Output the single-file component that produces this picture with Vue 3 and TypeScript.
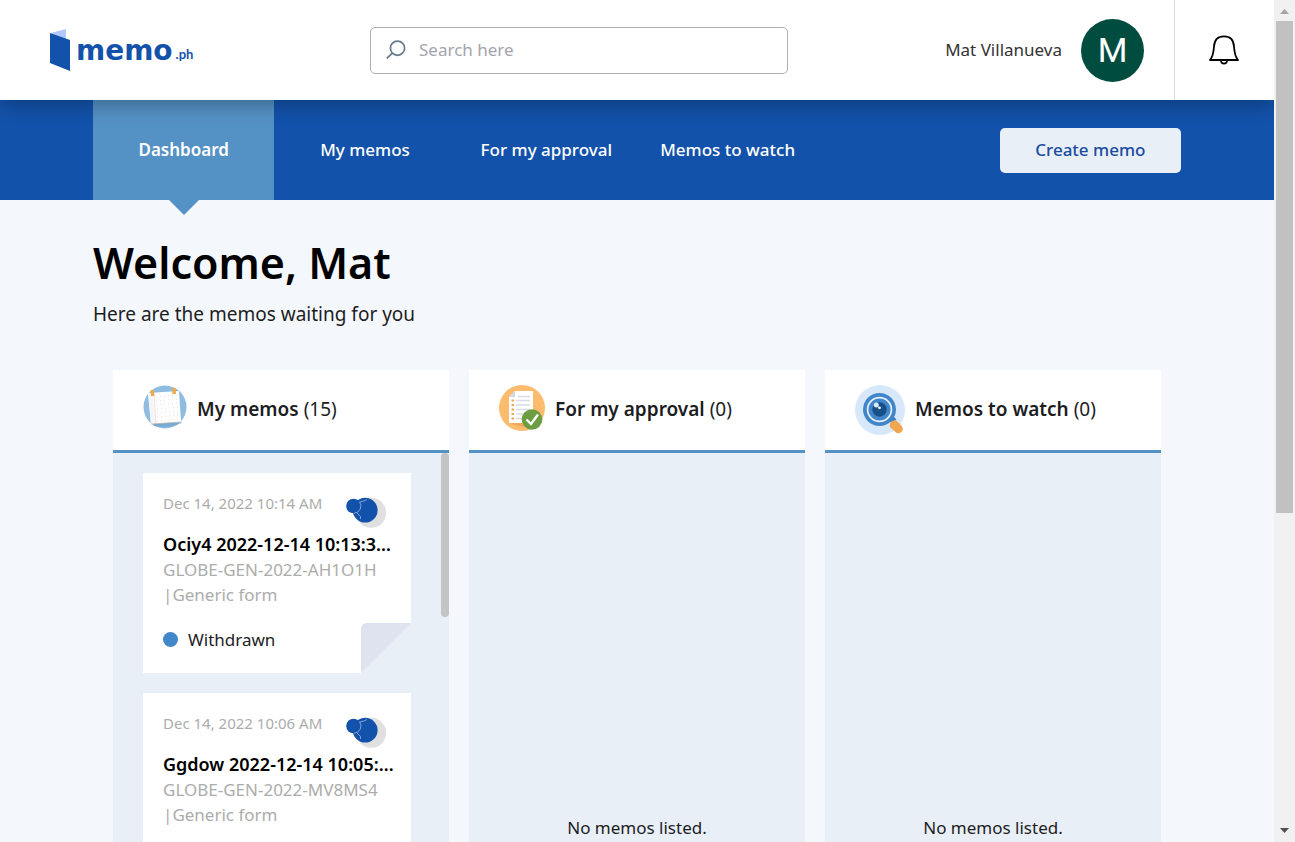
<script setup lang="ts">
interface Memo {
  date: string
  title: string
  code: string
  form: string
  status?: string
}

interface Board {
  id: 'mine' | 'approval' | 'watch'
  title: string
  count: number
  memos: Memo[]
}

const tabs = ['Dashboard', 'My memos', 'For my approval', 'Memos to watch']
const activeTab = 'Dashboard'

const boards: Board[] = [
  {
    id: 'mine',
    title: 'My memos',
    count: 15,
    memos: [
      { date: 'Dec 14, 2022 10:14 AM', title: 'Ociy4 2022-12-14 10:13:3…', code: 'GLOBE-GEN-2022-AH1O1H', form: 'Generic form', status: 'Withdrawn' },
      { date: 'Dec 14, 2022 10:06 AM', title: 'Ggdow 2022-12-14 10:05:…', code: 'GLOBE-GEN-2022-MV8MS4', form: 'Generic form' },
    ],
  },
  { id: 'approval', title: 'For my approval', count: 0, memos: [] },
  { id: 'watch', title: 'Memos to watch', count: 0, memos: [] },
]
</script>

<template>
  <div class="window">
    <div class="page">
      <header class="topbar">
        <a class="brand" href="#" aria-label="memo.ph home">
          <svg class="brand-mark" viewBox="0 0 20 42" aria-hidden="true">
            <path d="M1 4 L16 0 V10 L10 12 Z" fill="#b0c8fb" />
            <path d="M0 4 L20 11 V42 L0 34 Z" fill="#1352ab" />
          </svg>
          <span class="brand-name">memo</span><span class="brand-tld">.ph</span>
        </a>
        <label class="search">
          <svg class="search-icon" viewBox="0 0 20 20" fill="none" stroke="#66798c" stroke-width="1.7" aria-hidden="true">
            <circle cx="11.5" cy="8.2" r="7.1" />
            <path d="M6.4 13.2 L0.8 18.4" />
          </svg>
          <input type="search" placeholder="Search here" aria-label="Search" />
        </label>
        <div class="account">
          <span class="account-name">Mat Villanueva</span>
          <span class="avatar">M</span>
        </div>
        <button class="bell" type="button" aria-label="Notifications">
          <svg viewBox="0 0 32 32" fill="none" stroke="#000" stroke-width="1.8" aria-hidden="true">
            <path d="M2 26 C5.2 22.5 5.6 18 6 12.5 C6.4 5.5 10.5 2.4 16 2.4 C21.5 2.4 25.6 5.5 26 12.5 C26.4 18 26.8 22.5 30 26 Z" stroke-linejoin="round" />
            <path d="M13 27 C13.3 30.5 18.7 30.5 19 27" />
          </svg>
        </button>
      </header>

      <nav class="tabs">
        <a v-for="tab in tabs" :key="tab" href="#" class="tab" :class="{ active: tab === activeTab }">{{ tab }}</a>
        <button class="create" type="button">Create memo</button>
      </nav>

      <main class="content">
        <h1>Welcome, Mat</h1>
        <p class="lead">Here are the memos waiting for you</p>

        <div class="boards">
          <section v-for="board in boards" :key="board.id" class="board">
            <header class="board-head">
              <svg v-if="board.id === 'mine'" class="icon-mine" viewBox="0 0 44 46" aria-hidden="true">
                <circle cx="22" cy="22" r="21.5" fill="#90bce1" />
                <path d="M9 38 L37 36 L39 38 Q24 44 11 41 Z" fill="#6d9cc6" opacity=".6" />
                <path d="M5 8 L36 6 L38 37 L8 39 Z" fill="#fff" />
                <path d="M5 8 L10 8 L13 38 L8 39 Z" fill="#f7f6f6" />
                <g stroke="#e4dfe2" stroke-width="1" stroke-dasharray="1 3">
                  <path d="M13 12 L35 10" /><path d="M13 16 L35 14" /><path d="M13 20 L35 18" />
                  <path d="M14 24 L36 22" /><path d="M14 28 L36 26" /><path d="M14 32 L36 30" /><path d="M14 36 L36 34" />
                </g>
                <path d="M11 9 L13 38" stroke="#f2dce2" stroke-width=".8" />
                <path d="M8 39 L38 37" stroke="#b9b8ae" stroke-width=".8" />
                <path d="M7.5 5 L11 5 L11.5 11 L8 11 Z M29 3 L32.5 3 L33 9 L29.5 9 Z" fill="#f1a94e" />
              </svg>
              <svg v-else-if="board.id === 'approval'" class="icon-approval" viewBox="0 0 46 46" aria-hidden="true">
                <circle cx="23" cy="23" r="23" fill="#fdbb6d" />
                <path d="M11 38 L34 38 L30 42 L18 41 Z" fill="#e99d4d" opacity=".6" />
                <path d="M16 6 H34 V38 H10 V12 Z" fill="#fff" />
                <path d="M16 6 V12 H10 Z" fill="#d3d6e3" />
                <path d="M19 11.5 H31 M17 15.5 H31 M17 20 H31 M17 24.5 H31 M17 29 H26 M17 33.5 H24" stroke="#d9dbe4" stroke-width="1.7" />
                <path d="M12.5 15.5 H15 M12.5 20 H15 M12.5 24.5 H15 M12.5 29 H15 M12.5 33.5 H15" stroke="#f1a350" stroke-width="2" />
                <circle cx="33" cy="34.5" r="10.3" fill="#6c9d42" />
                <path d="M27.5 34.5 L32 39 L39 29.5" fill="none" stroke="#fff" stroke-width="2.3" />
              </svg>
              <svg v-else class="icon-watch" viewBox="0 0 50 50" aria-hidden="true">
                <circle cx="25" cy="25" r="25" fill="#d8e8fb" />
                <path d="M35 36 L39 34 L36 31" fill="none" stroke="#3e7dbe" stroke-width="3" />
                <path d="M39 40 L43.5 44" stroke="#f1a64f" stroke-width="8.5" stroke-linecap="round" />
                <path d="M34.5 41 L40.5 35 L45 39 L39 45 Z" fill="#f1a64f" />
                <circle cx="24.5" cy="24.5" r="16.5" fill="#4286ca" />
                <circle cx="24.5" cy="24.5" r="11.9" fill="#4286ca" stroke="#e5f1fd" stroke-width="1.7" />
                <circle cx="24.5" cy="24.5" r="7.2" fill="#174f88" />
                <circle cx="21.3" cy="20" r="2.5" fill="#dcebf9" />
                <circle cx="24.5" cy="22.8" r="1.4" fill="#fff" />
              </svg>
              <h2>{{ board.title }} <span class="count">({{ board.count }})</span></h2>
            </header>

            <div v-if="board.memos.length" class="board-body">
              <div class="memo-list">
                <article v-for="memo in board.memos" :key="memo.code" class="memo">
                  <div class="memo-top">
                    <time>{{ memo.date }}</time>
                    <svg class="bubbles" viewBox="0 0 40 32" aria-hidden="true">
                      <circle cx="25.2" cy="15.8" r="15" fill="#e0e0e0" />
                      <circle cx="19.2" cy="13.2" r="12.4" fill="#1352ab" />
                      <path d="M14 5 L18 4 L21 2.5 M11 16 L14.5 19.5 L14.5 22" fill="none" stroke="#b5c6e4" stroke-width=".7" />
                      <circle cx="7.5" cy="9" r="7.3" fill="#1352ab" />
                      <path d="M13.5 4.7 A7.3 7.3 0 0 1 8 16.3" fill="none" stroke="#b5c6e4" stroke-width=".7" />
                    </svg>
                  </div>
                  <h3>{{ memo.title }}</h3>
                  <p class="memo-meta">{{ memo.code }}</p>
                  <p class="memo-meta"><span>|</span> <span>{{ memo.form }}</span></p>
                  <p v-if="memo.status" class="memo-status"><span class="dot"></span>{{ memo.status }}</p>
                  <svg class="fold" viewBox="0 0 50 50" aria-hidden="true">
                    <path d="M0 0 H50 V50 H0 Z" fill="#e8eff7" />
                    <path d="M0 0 H8 V8 H0 Z" fill="#fff" />
                    <path d="M0 50 V6 Q0 0 6 0 H50 Z" fill="#dfe3f0" />
                  </svg>
                </article>
              </div>
              <div class="list-scroll"><div class="list-thumb"></div></div>
            </div>
            <div v-else class="board-body empty">No memos listed.</div>
          </section>
        </div>
      </main>
    </div>

    <div class="scrollbar" aria-hidden="true">
      <svg viewBox="0 0 21 21"><path d="M6 14 L10.5 9 L15 14 Z" fill="#a3a3a3" /></svg>
      <div class="track"><div class="thumb"></div></div>
      <svg viewBox="0 0 21 21"><path d="M6 7 L10.5 12 L15 7 Z" fill="#505050" /></svg>
    </div>
  </div>
</template>

<style>
body {
  margin: 0;
  overflow: hidden;
}
</style>

<style scoped>
.window,
.window * {
  box-sizing: border-box;
}

.window {
  display: flex;
  height: 100vh;
  overflow: hidden;
  background: #f4f7fc;
  color: #1d1d1f;
  font-family: "Noto Sans", "Open Sans", sans-serif;
  font-size: 17px;
  line-height: 25px;
}

.page {
  flex: 1;
  min-width: 0;
  overflow: hidden;
}

button,
input {
  font: inherit;
}

a {
  color: inherit;
  text-decoration: none;
}

h1,
h2,
h3,
p {
  margin: 0;
}

.topbar {
  position: relative;
  z-index: 1;
  display: flex;
  align-items: center;
  height: 100px;
  padding-left: 50px;
  background: #fff;
  box-shadow: 0 4px 20px rgba(0, 0, 0, 0.3);
}

.brand {
  display: flex;
  align-items: center;
  width: 320px;
  color: #1352ab;
  font-family: "DejaVu Sans", sans-serif;
  font-weight: 700;
}

.brand-mark {
  width: 20px;
  height: 42px;
  margin-right: 6px;
}

.brand-name {
  font-size: 28px;
}

.brand-tld {
  padding-top: 8px;
  padding-left: 3px;
  font-family: Lato, sans-serif;
  font-size: 13px;
}

.search {
  display: flex;
  flex: 0 1 418px;
  align-items: center;
  gap: 13px;
  height: 47px;
  padding: 0 15px;
  border: 1px solid #b0b0b0;
  border-radius: 5px;
}

.search-icon {
  flex: none;
  width: 20px;
  height: 20px;
}

.search input {
  flex: 1;
  min-width: 0;
  padding: 0 0 2px;
  border: 0;
  outline: 0;
  background: none;
}

.search input::placeholder {
  color: #a4a4ae;
}

.account {
  display: flex;
  flex: 1;
  align-items: center;
  justify-content: flex-end;
  gap: 19px;
  padding-right: 30px;
  white-space: nowrap;
}

.account-name {
  padding-bottom: 2px;
  color: #333;
}

.avatar {
  display: grid;
  place-items: center;
  width: 63px;
  height: 63px;
  border-radius: 50%;
  background: #004d40;
  color: #fff;
  font-family: Roboto, sans-serif;
  font-size: 34px;
}

.bell {
  display: grid;
  place-items: center;
  width: 100px;
  height: 100px;
  padding: 0 2px 0 0;
  border: 0;
  border-left: 1px solid #dcdcdc;
  background: none;
}

.bell svg {
  width: 32px;
  height: 32px;
}

.tabs {
  display: grid;
  grid-template-columns: repeat(6, 1fr);
  align-items: center;
  height: 100px;
  padding: 0 93px;
  background: #1352ab;
  color: #fff;
}

.tab {
  position: relative;
  display: grid;
  place-items: center;
  height: 100px;
  padding-bottom: 2px;
  font-weight: 500;
  white-space: nowrap;
}

.tab.active {
  background: #5491c5;
  font-weight: 600;
}

.tab.active::after {
  position: absolute;
  top: 100%;
  left: calc(50% - 15px);
  border: 15px solid transparent;
  border-top-color: #5491c5;
  border-bottom: 0;
  content: "";
}

.create {
  grid-column: 6;
  height: 45px;
  padding: 0 0 2px;
  border: 0;
  border-radius: 5px;
  background: #e8eff7;
  color: #1a4c9f;
  font-weight: 500;
}

.content {
  padding: 33px 93px 0;
}

h1 {
  color: #000;
  font-size: 43px;
  font-weight: 600;
  line-height: 60px;
}

.lead {
  padding-top: 6px;
  font-size: 19px;
  line-height: 30px;
}

.boards {
  display: grid;
  grid-template-columns: repeat(3, 1fr);
  gap: 20px;
  padding: 41px 20px 0;
}

.board {
  min-width: 0;
}

.board-head {
  display: flex;
  align-items: center;
  gap: 10px;
  height: 83px;
  padding: 0 0 2px 30px;
  border-bottom: 3px solid #5491c5;
  background: #fff;
}

.board-head svg {
  flex: none;
}

.icon-mine {
  width: 44px;
  height: 46px;
  margin-bottom: 2px;
}

.icon-approval {
  width: 46px;
  height: 46px;
  margin-bottom: 2px;
}

.icon-watch {
  width: 50px;
  height: 50px;
  margin-top: 2px;
}

h2 {
  font-size: 19px;
  font-weight: 600;
  line-height: 25px;
  white-space: nowrap;
}

.count {
  font-weight: 400;
}

.board-body {
  display: flex;
  height: 750px;
  background: #e8eff7;
}

.board-body.empty {
  align-items: center;
  justify-content: center;
  padding-bottom: 2px;
}

.memo-list {
  display: flex;
  flex: 1;
  flex-direction: column;
  gap: 20px;
  min-width: 0;
  padding: 20px 30px;
}

.memo {
  position: relative;
  min-height: 200px;
  padding: 20px;
  background: #fff;
}

.memo-top {
  display: flex;
  justify-content: space-between;
  height: 39px;
  margin-right: 5px;
}

time {
  color: #acacac;
  font-size: 15px;
  line-height: 20px;
  white-space: nowrap;
}

.bubbles {
  flex: none;
  width: 40px;
  height: 32px;
  margin-top: 4px;
}

h3 {
  color: #000;
  font-size: 18px;
  font-weight: 600;
  line-height: 25px;
  white-space: nowrap;
}

.memo-meta {
  display: flex;
  color: #acacac;
  white-space: nowrap;
}

.memo-status {
  display: flex;
  align-items: center;
  gap: 10px;
  padding-top: 20px;
}

.dot {
  width: 15px;
  height: 15px;
  border-radius: 50%;
  background: #4287ca;
}

.fold {
  position: absolute;
  right: 0;
  bottom: 0;
  width: 50px;
  height: 50px;
}

.list-scroll {
  width: 8px;
}

.list-thumb {
  height: 164px;
  border-radius: 4px;
  background: #c4c4c4;
}

.scrollbar {
  display: flex;
  flex: none;
  flex-direction: column;
  width: 21px;
  background: #f1f1f1;
}

.scrollbar svg {
  flex: none;
  width: 21px;
  height: 21px;
}

.track {
  flex: 1;
  padding: 0 2px;
}

.thumb {
  height: 61.5%;
  background: #c1c1c1;
}
</style>
